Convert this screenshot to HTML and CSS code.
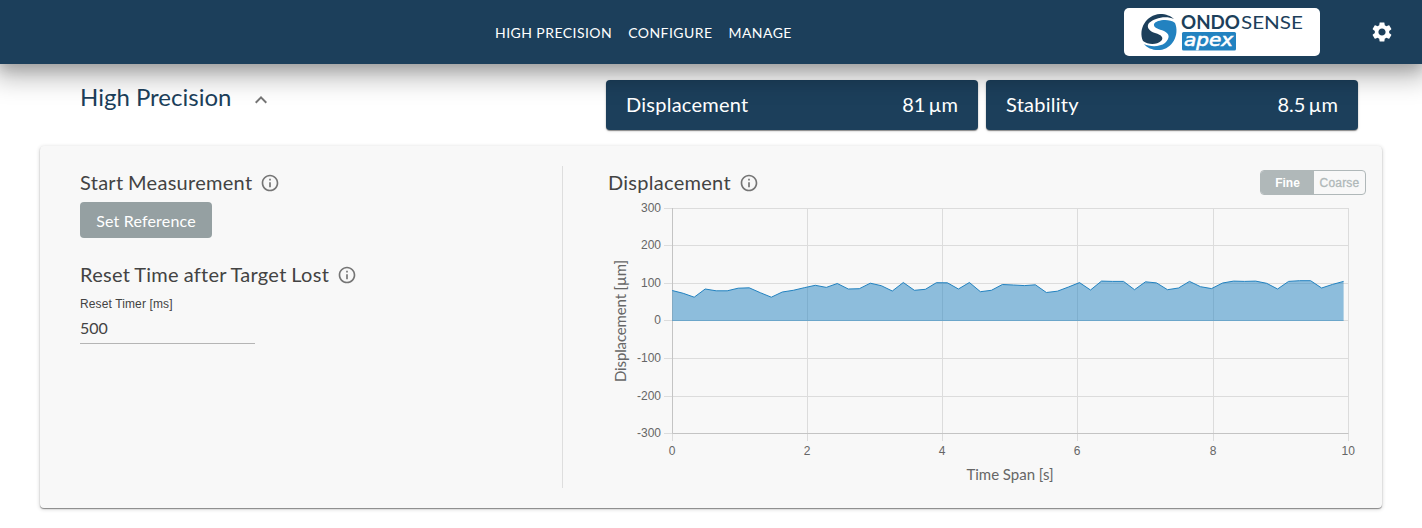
FILE: index.html
```html
<!DOCTYPE html>
<html lang="en">

<head>
  <meta charset="UTF-8">
  <meta name="viewport" content="width=device-width, initial-scale=1.0">
  <title>OndoSense apex</title>
  <link rel="stylesheet" href="styles.css">
</head>

<body>

  <header class="toolbar">
    <nav class="nav">
      <a>HIGH PRECISION</a>
      <a>CONFIGURE</a>
      <a>MANAGE</a>
    </nav>
    <div class="logo">
      <svg width="196" height="48" viewBox="0 0 196 48">
        <path fill="#1c3f5b" d="M19 33C14 21 22 7 36 6C42 6 47 8 50 11C42 7 30 10 25 15C22 19 25 23 31 25C38 27 40 30 37 33C33 37 24 37 19 33Z" />
        <path fill="#2282c0" d="M51 15C56 27 48 41 36 42C29 42.500 23 40 20 36C26 39 36 39 41 35C46 30 46 26 40 23C35 21 29 20 30 16C32 12 45 10 51 15Z" />
        <text class="logo-bold" x="57" y="20.500" textLength="59" lengthAdjust="spacingAndGlyphs">ONDO</text>
        <text class="logo-thin" x="117" y="20.500" textLength="62" lengthAdjust="spacingAndGlyphs">SENSE</text>
        <rect x="58" y="24" width="54" height="18.500" rx="1.500" fill="#2282c0" />
        <text class="logo-apex" x="60" y="38" textLength="49" lengthAdjust="spacingAndGlyphs">apex</text>
      </svg>
    </div>
    <svg class="gear" width="24" height="24" viewBox="0 0 24 24">
      <path d="M19.140 12.940c.040-.300.060-.610.060-.940 0-.320-.020-.640-.070-.940l2.030-1.580c.180-.140.230-.410.120-.610l-1.920-3.320c-.120-.220-.370-.290-.590-.220l-2.390.960c-.500-.380-1.030-.700-1.620-.940l-.360-2.540c-.040-.240-.240-.410-.480-.410h-3.840c-.240 0-.430.170-.470.410l-.360 2.540c-.590.240-1.130.570-1.620.940l-2.390-.960c-.220-.080-.470 0-.590.220L2.740 8.870c-.120.210-.080.470.120.610l2.030 1.580c-.050.300-.090.630-.090.940s.020.640.070.940l-2.030 1.580c-.180.140-.230.410-.120.610l1.920 3.320c.120.220.370.290.590.220l2.390-.960c.500.380 1.030.700 1.620.940l.360 2.540c.050.240.240.410.480.410h3.840c.240 0 .440-.170.470-.410l.360-2.540c.590-.240 1.130-.560 1.620-.940l2.390.960c.220.080.470 0 .590-.220l1.920-3.320c.120-.220.070-.470-.120-.610l-2.010-1.580zM12 15.600c-1.980 0-3.600-1.620-3.600-3.600s1.620-3.600 3.600-3.600 3.600 1.620 3.600 3.600-1.620 3.600-3.600 3.600z" />
    </svg>
  </header>

  <main>
    <div class="summary">
      <h1>High Precision</h1>
      <svg class="chevron" width="24" height="24" viewBox="0 0 24 24">
        <path d="M12 8l-6 6 1.410 1.410L12 10.830l4.590 4.580L18 14z" />
      </svg>
      <div class="tiles">
        <div class="tile"><span>Displacement</span><span class="value">81 µm</span></div>
        <div class="tile"><span>Stability</span><span class="value">8.5 µm</span></div>
      </div>
    </div>

    <div class="panel">
      <section class="settings">
        <h2>Start Measurement
          <svg class="info" width="20" height="20" viewBox="0 0 24 24"><path d="M11 7h2v2h-2zm0 4h2v6h-2zm1-9C6.480 2 2 6.480 2 12s4.480 10 10 10 10-4.480 10-10S17.520 2 12 2zm0 18c-4.410 0-8-3.590-8-8s3.590-8 8-8 8 3.590 8 8-3.590 8-8 8z" /></svg>
        </h2>
        <button class="set-ref" type="button">Set Reference</button>
        <h2>Reset Time after Target Lost
          <svg class="info" width="20" height="20" viewBox="0 0 24 24"><path d="M11 7h2v2h-2zm0 4h2v6h-2zm1-9C6.480 2 2 6.480 2 12s4.480 10 10 10 10-4.480 10-10S17.520 2 12 2zm0 18c-4.410 0-8-3.590-8-8s3.590-8 8-8 8 3.590 8 8-3.590 8-8 8z" /></svg>
        </h2>
        <label for="resetTimer">Reset Timer [ms]</label>
        <input type="text" id="resetTimer" value="500">
      </section>

      <section class="graph">
        <div class="graph-head">
          <h2>Displacement
            <svg class="info" width="20" height="20" viewBox="0 0 24 24"><path d="M11 7h2v2h-2zm0 4h2v6h-2zm1-9C6.480 2 2 6.480 2 12s4.480 10 10 10 10-4.480 10-10S17.520 2 12 2zm0 18c-4.410 0-8-3.590-8-8s3.590-8 8-8 8 3.590 8 8-3.590 8-8 8z" /></svg>
          </h2>
          <div class="toggle"><span class="on">Fine</span><span>Coarse</span></div>
        </div>
        <svg class="chart" id="chart" width="760" height="290" viewBox="604 198 760 290"></svg>
      </section>
    </div>
  </main>

  <script src="chart.js"></script>
</body>

</html>
```
FILE: styles.css
```css
* {
  box-sizing: border-box;
}

body {
  font-family: Lato, sans-serif;
  background: #fff;
  color: #434343;
  margin: 0;
  height: 528px;
  overflow: hidden;
}

.toolbar {
  position: relative;
  z-index: 2;
  display: grid;
  grid-template-columns: 1fr 196px 24px;
  align-items: center;
  height: 64px;
  padding: 0 28px 0 495px;
  background: #1c3f5b;
  box-shadow: 0 5px 12px rgba(0, 0, 0, 0.16), 0 8px 26px 6px rgba(0, 0, 0, 0.28);
  column-gap: 50px;
}

.nav {
  display: flex;
  gap: 16px;
  color: #fff;
  font-size: 14px;
  letter-spacing: 0.45px;
  line-height: 20px;
  padding-top: 2px;
  white-space: nowrap;
}

.logo {
  height: 48px;
  background: #fff;
  border-radius: 5px;
}

.logo-bold,
.logo-thin {
  font-size: 18px;
  fill: #1c3f5b;
}

.logo-bold {
  font-weight: bold;
}

.logo-apex {
  font: italic 18px "DejaVu Sans", sans-serif;
  fill: #fff;
  stroke: #fff;
  stroke-width: 0.6px;
}

.gear {
  fill: #fff;
}

.summary {
  display: flex;
  align-items: flex-start;
  height: 82px;
  padding: 16px 64px 0 80px;
}

h1 {
  margin: 0;
  font-size: 24px;
  font-weight: normal;
  line-height: 34px;
  color: #1c3f5b;
}

.chevron {
  fill: #757575;
  margin: 8px 0 0 18px;
}

.tiles {
  display: flex;
  gap: 8px;
  margin-left: auto;
}

.tile {
  display: flex;
  justify-content: space-between;
  width: 372px;
  height: 50px;
  padding: 0 20px;
  line-height: 48px;
  font-size: 20px;
  letter-spacing: 0.25px;
  color: #fff;
  background: #1c3f5b;
  border-radius: 4px;
  box-shadow: 0 1px 1px rgba(0, 0, 0, 0.4), 0 1px 3px rgba(0, 0, 0, 0.15);
}

.value {
  letter-spacing: 0;
  word-spacing: -2px;
}

.panel {
  display: flex;
  width: 1342px;
  height: 362px;
  margin-left: 40px;
  padding: 20px 0;
  background: #f8f8f8;
  border-radius: 4px;
  box-shadow: 0 1px 1px rgba(0, 0, 0, 0.4), 0 1px 4px rgba(0, 0, 0, 0.2);
}

.settings {
  width: 523px;
  padding-left: 40px;
  border-right: 1px solid #dedede;
}

h2 {
  display: flex;
  align-items: center;
  gap: 8px;
  height: 34px;
  margin: 0;
  font-size: 20px;
  font-weight: normal;
  letter-spacing: 0.28px;
  word-spacing: -0.7px;
  line-height: 32px;
  white-space: nowrap;
  padding-bottom: 2px;
}

.info {
  fill: #757575;
  margin-top: 2px;
}

.set-ref {
  display: block;
  width: 132px;
  height: 36px;
  margin: 2px 0 20px;
  padding: 0;
  border: none;
  border-radius: 4px;
  background: #95a0a2;
  color: #fff;
  font: 16px Lato, sans-serif;
  letter-spacing: 0.17px;
}

label {
  display: block;
  font: 12px/16px "Liberation Sans", Arial, sans-serif;
  letter-spacing: 0.12px;
  margin-top: 4px;
}

input {
  display: block;
  width: 175px;
  height: 32px;
  padding: 0;
  border: none;
  border-bottom: 1px solid #b5b5b5;
  background: none;
  color: #434343;
  font: 16px Lato, sans-serif;
}

.graph {
  flex: 1;
  padding-left: 41px;
}

.graph-head {
  display: flex;
  justify-content: space-between;
  align-items: flex-start;
  height: 32px;
  padding: 0 16px 0 4px;
}

.toggle {
  display: flex;
  width: 106px;
  height: 25px;
  margin-top: 4px;
  border: 1px solid #b0b8b9;
  border-radius: 4px;
  overflow: hidden;
  font: 12px/24px "Liberation Sans", Arial, sans-serif;
  letter-spacing: 0.2px;
  color: #b0b8b9;
  text-align: center;
}

.toggle span {
  flex: 1;
  -webkit-text-stroke: 0.3px #b0b8b9;
}

.toggle .on {
  flex: 0 0 53px;
  background: #b0b8b9;
  color: #fff;
  font-weight: bold;
  letter-spacing: 0;
  -webkit-text-stroke: 0;
}

.chart {
  display: block;
}

.grid {
  stroke: #dcdcdc;
}

.axis {
  stroke: #c4c4c4;
}

.tick {
  font: 12px "Liberation Sans", Arial, sans-serif;
  fill: #666;
}

.axis-title {
  font-size: 15px;
  fill: #666;
}

.area {
  fill: #2282c0;
  fill-opacity: 0.5;
}

.line {
  fill: none;
  stroke: #2282c0;
}
```
FILE: chart.js
```javascript
var left = 672.5, right = 1348.5, zero = 320.5;

// one sample every 11px, as y positions
var samples = [290.5, 293.3, 297.2, 289, 290.8, 290.8, 288.2, 287.8, 292.7, 297.2, 292, 290.3, 287.7,
  285.3, 287.4, 283.5, 289, 288.7, 283.2, 285.7, 291, 282.5, 290.3, 289.3, 282.7, 282.8, 289, 282.5,
  291.7, 290.3, 284.5, 285, 285.6, 284.8, 292.5, 291.2, 287, 282.6, 290, 281.1, 281.4, 281.4, 289.7,
  281.8, 282.9, 289.7, 288, 281.4, 286.7, 288.6, 283, 281.1, 281.4, 281.1, 283.3, 289, 281.4, 280.7,
  280.7, 288, 284.4, 281.4];

var out = '';
var ys = [208.5, 245.5, 283.5, 320.5, 358.5, 396.5, 433.5];
ys.forEach(function (y, i) {
  out += `<path class="grid" d="M664 ${y}H1349" />`;
  out += `<text class="tick" x="661" y="${y + 3.5}" text-anchor="end">${300 - i * 100}</text>`;
});
[672.5, 807.5, 942.5, 1077.5, 1213.5, 1348.5].forEach(function (x, i) {
  out += `<path class="grid" d="M${x} 208V441" />`;
  out += `<text class="tick" x="${x - 0.3}" y="455" text-anchor="middle">${i * 2}</text>`;
});
out += `<path class="axis" d="M${left} 208V433.5H${right}" fill="none" />`;

var pts = samples.map(function (y, i) {
  return (672.2 + i * 11.007).toFixed(1) + ' ' + y;
}).join('L');
out += `<path class="area" d="M${pts}V321H672.2Z" />`;
out += `<path class="line" d="M${pts}" />`;
out += `<path class="line" opacity="0.2" d="M672 ${zero}H1343.5" />`;

out += '<text class="axis-title" x="1010" y="480" text-anchor="middle" textLength="87">Time Span [s]</text>';
out += '<text class="axis-title" transform="translate(626 321) rotate(-90)" text-anchor="middle" textLength="122">Displacement [µm]</text>';

document.getElementById('chart').innerHTML = out;
```
